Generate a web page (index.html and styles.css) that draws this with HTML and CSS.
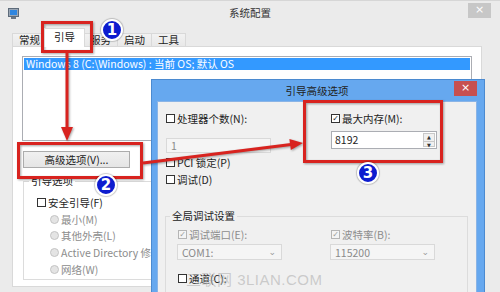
FILE: index.html
```html
<!DOCTYPE html>
<html lang="zh-CN">
<head>
  <meta charset="UTF-8">
  <title>系统配置</title>
  <link rel="stylesheet" href="styles.css">
</head>
<body>
  <div class="desktop">
    <div class="window main">
      <div class="titlebar">
        <span class="app-icon">
          <svg width="11" height="11" viewBox="0 0 11 11">
            <rect x="0.5" y="0.5" width="10" height="8" fill="#9aa6b4" stroke="#5d6b7a"/>
            <rect x="2" y="2" width="7" height="5" fill="#2f86e0"/>
            <rect x="3" y="9" width="5" height="2" fill="#6b7785"/>
          </svg>
        </span>
        <span class="title">系统配置</span>
        <span class="close gray">×</span>
      </div>
      <div class="client">
        <div class="tabs">
          <span class="tab">常规</span>
          <span class="tab active">引导</span>
          <span class="tab">服务</span>
          <span class="tab">启动</span>
          <span class="tab">工具</span>
        </div>
        <div class="tab-page">
          <div class="listbox">
            <div class="list-item selected">Windows 8 (C:\Windows) : 当前 OS; 默认 OS</div>
          </div>
          <div class="button-row">
            <button class="btn">高级选项(V)...</button>
          </div>
          <fieldset class="group boot-options">
            <legend>引导选项</legend>
            <div class="rows">
              <label class="row"><span class="box"></span>安全引导(F)</label>
              <label class="row sub disabled"><span class="dot"></span>最小(M)</label>
              <label class="row sub disabled"><span class="dot"></span>其他外壳(L)</label>
              <label class="row sub disabled"><span class="dot"></span>Active Directory 修复(A)</label>
              <label class="row sub disabled"><span class="dot"></span>网络(W)</label>
            </div>
          </fieldset>
        </div>
      </div>
    </div>

    <div class="window dialog">
      <div class="titlebar">
        <span></span>
        <span class="title">引导高级选项</span>
        <span class="close red">×</span>
      </div>
      <div class="dialog-client">
        <div class="columns">
          <div class="col">
            <label class="row"><span class="box"></span>处理器个数(N):</label>
            <div class="combo disabled cpu"><span>1</span><span class="chev">⌄</span></div>
            <label class="row pci"><span class="box"></span>PCI 锁定(P)</label>
            <label class="row"><span class="box"></span>调试(D)</label>
          </div>
          <div class="col">
            <label class="row"><span class="box checked">✓</span>最大内存(M):</label>
            <div class="spin"><span class="value">8192</span><span class="spin-btns"><i>▲</i><i>▼</i></span></div>
          </div>
        </div>
        <fieldset class="group debug">
          <legend>全局调试设置</legend>
          <div class="debug-grid">
            <div class="col">
              <label class="row disabled"><span class="box checked">✓</span>调试端口(E):</label>
              <div class="combo disabled"><span>COM1:</span><span class="chev">⌄</span></div>
              <label class="row gap-top"><span class="box"></span>通道(C):</label>
            </div>
            <div class="col">
              <label class="row disabled"><span class="box checked">✓</span>波特率(B):</label>
              <div class="combo disabled"><span>115200</span><span class="chev">⌄</span></div>
            </div>
          </div>
        </fieldset>
      </div>
    </div>

    <div class="watermark">三联网 3LIAN.COM</div>

    <svg class="marks" width="500" height="292" viewBox="0 0 500 292">
      <rect x="42.5" y="22.5" width="49" height="29"/>
      <rect x="18.5" y="143.5" width="123" height="34"/>
      <rect x="304.5" y="101.5" width="137" height="60"/>
      <line x1="67" y1="53" x2="67" y2="128"/>
      <polygon points="61,127 73,127 67,141"/>
      <line x1="143" y1="163" x2="291" y2="144.5"/>
      <polygon points="303,143 290.8,150.1 289.4,139.1"/>
    </svg>

    <div class="badge b1">1</div>
    <div class="badge b2">2</div>
    <div class="badge b3">3</div>
  </div>
</body>
</html>
```

FILE: styles.css
```css
* {
  box-sizing: border-box;
}
body {
  margin: 0;
  font-family: "Noto Sans CJK SC", "Noto Sans", sans-serif;
  font-size: 10.5px;
  color: #1e1e1e;
}
.desktop {
  position: relative;
  width: 500px;
  height: 292px;
  overflow: hidden;
  background: #ebebeb;
}

/* window chrome */
.titlebar {
  display: grid;
  grid-template-columns: 1fr auto 1fr;
  align-items: start;
  height: 23px;
}
.title {
  line-height: 23px;
  color: #333;
}
.close {
  justify-self: end;
  width: 23px;
  height: 15px;
  line-height: 14px;
  text-align: center;
  color: #fff;
  font-family: "DejaVu Sans", sans-serif;
  font-size: 11px;
}
.close.gray {
  background: #c7c7c7;
  margin: 2px 9px 0 0;
}
.close.red {
  background: #c75050;
  margin-top: 1px;
}
.app-icon {
  display: flex;
  padding: 7px 0 0 8px;
}

/* main window */
.main {
  width: 500px;
  height: 292px;
  border-top: 1px solid #d6d6d6;
}
.client {
  padding: 4px 18px 0 12px;
}
.tabs {
  display: flex;
  align-items: flex-end;
  height: 18px;
}
.tab {
  height: 13px;
  line-height: 12px;
  padding: 0 6px;
  border: 1px solid #d9d9d9;
  border-bottom: none;
  margin-right: -1px;
  background: linear-gradient(#f2f2f2, #e8e8e8);
  color: #222;
}
.tab.active {
  position: relative;
  height: 19px;
  line-height: 16px;
  margin: 0 -2px -1px -2px;
  padding: 0 9px;
  background: #fff;
  z-index: 1;
}
.tab-page {
  height: 241px;
  background: #fff;
  border: 1px solid #d9d9d9;
  padding: 9px;
}
.listbox {
  height: 85px;
  border: 1px solid #abadb3;
  padding: 1px;
}
.list-item {
  height: 12px;
  line-height: 11px;
  padding-left: 2px;
}
.list-item.selected {
  background: #3399ff;
  color: #fff;
}
.button-row {
  margin: 10px 0 0 1px;
}
.btn {
  width: 107px;
  height: 17px;
  padding: 0;
  border: 1px solid #acacac;
  background: linear-gradient(#f0f0f0, #e5e5e5);
  font: inherit;
  line-height: 14px;
  color: #222;
}

/* group boxes */
.group {
  margin: 0;
  border: 1px solid #dcdcdc;
  padding: 0 0 0 5px;
}
.group legend {
  padding: 0 2px;
  line-height: 12px;
  color: #222;
}
.boot-options {
  width: 300px;
  height: 105px;
  margin: 7px 0 0 1px;
}
.boot-options .rows {
  padding: 7px 0 0 8px;
}
.boot-options .row {
  height: 16.7px;
}

/* controls */
.row {
  display: flex;
  align-items: center;
  gap: 2px;
  height: 17px;
  white-space: nowrap;
}
.row.disabled {
  color: #8d8d8d;
}
.row.sub {
  padding-left: 13px;
}
.box {
  width: 9px;
  height: 9px;
  border: 1px solid #333;
  background: #fff;
  font-size: 8px;
  line-height: 7px;
  text-align: center;
  font-family: "DejaVu Sans", sans-serif;
  font-weight: bold;
  color: #222;
}
.disabled .box {
  border-color: #b5b5b5;
  background: #f4f4f4;
  color: #9a9a9a;
}
.dot {
  width: 9px;
  height: 9px;
  border-radius: 50%;
  border: 1px solid #c4c4c4;
  background: #e4e4e4;
}
.combo {
  display: flex;
  justify-content: space-between;
  align-items: center;
  width: 105px;
  height: 16px;
  padding: 0 5px 0 4px;
  border: 1px solid #d9d9d9;
  background: #f5f5f5;
  color: #8a8a8a;
}
.chev {
  font-family: "DejaVu Sans", sans-serif;
  font-size: 9px;
  line-height: 6px;
  color: #9a9a9a;
}
.spin {
  display: flex;
  width: 106px;
  height: 18px;
  margin-top: 4px;
  border: 1px solid #abadb3;
  background: #fff;
}
.spin .value {
  flex: 1;
  padding-left: 3px;
  line-height: 16px;
}
.spin-btns {
  display: flex;
  flex-direction: column;
  width: 12px;
  margin: 1px;
  border: 1px solid #c8c8c8;
  background: #f0f0f0;
}
.spin-btns i {
  flex: 1;
  font-style: normal;
  font-family: "DejaVu Sans", sans-serif;
  font-size: 5px;
  line-height: 7px;
  text-align: center;
  color: #333;
}
.spin-btns i + i {
  border-top: 1px solid #c8c8c8;
}

/* advanced options dialog */
.dialog {
  position: absolute;
  left: 151px;
  top: 79px;
  width: 334px;
  height: 240px;
  padding: 0 7px 0 5px;
  background: #66a8ef;
  border: 1px solid #4b8ad0;
}
.dialog .titlebar {
  height: 21px;
}
.dialog .title {
  line-height: 22px;
  color: #222;
}
.dialog-client {
  height: 220px;
  background: #f0f0f0;
  border: 1px solid #8ab4e6;
  padding: 8px 0 0 8px;
}
.columns {
  display: grid;
  grid-template-columns: 165px 1fr;
}
.columns .row {
  height: 17px;
}
.columns .combo.cpu {
  height: 15px;
  margin-top: 11px;
}
.row.pci {
  margin-top: 1px;
}
.gap-top {
  margin-top: 8px;
}
.debug {
  width: 303px;
  height: 120px;
  margin: 22px 0 0 -1px;
  padding-left: 4px;
}
.debug-grid {
  display: grid;
  grid-template-columns: 153px 1fr;
  padding: 4px 0 0 8px;
}
.debug-grid .combo {
  margin: 1px 0 0 -1px;
}
.debug-grid .gap-top {
  margin-top: 10px;
}

/* annotations */
.watermark {
  position: absolute;
  left: 186px;
  top: 268px;
  font-family: "Liberation Sans", "Noto Sans CJK SC", sans-serif;
  font-size: 15px;
  letter-spacing: 0.5px;
  color: rgba(170, 170, 170, 0.55);
}
.marks {
  position: absolute;
  left: 0;
  top: 0;
  pointer-events: none;
  filter: drop-shadow(1px 1px 1px rgba(0, 0, 0, 0.35));
}
.marks rect,
.marks line {
  fill: none;
  stroke: #d8231f;
  stroke-width: 3;
}
.marks polygon {
  fill: #d8231f;
}
.badge {
  position: absolute;
  width: 22px;
  height: 22px;
  border-radius: 50%;
  border: 2px solid #fff;
  background: #0d1ccf;
  color: #fff;
  font-family: "DejaVu Sans", sans-serif;
  font-weight: bold;
  font-size: 15px;
  line-height: 18px;
  text-align: center;
  box-shadow: 0 0 1px 1px rgba(0, 0, 0, 0.2);
}
.b1 {
  left: 101px;
  top: 19px;
}
.b2 {
  left: 95px;
  top: 174px;
}
.b3 {
  left: 357px;
  top: 162px;
}
```
